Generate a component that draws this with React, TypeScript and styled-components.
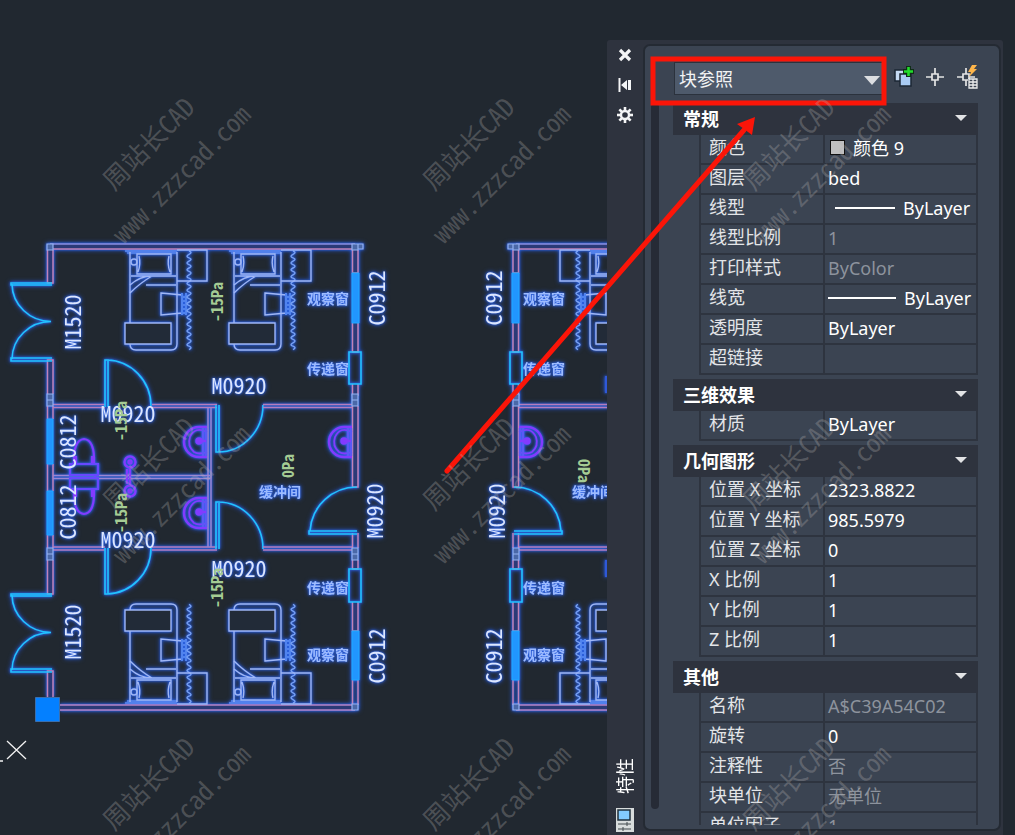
import React from "react";
import styled, { createGlobalStyle } from "styled-components";

const GlobalStyle = createGlobalStyle`
  * { box-sizing: border-box; }
  body { margin: 0; background: #212830; }
`;

const ui = `"Noto Sans", "Noto Sans CJK SC", sans-serif`;

const Workspace = styled.main`
  position: relative;
  display: flex;
  height: 100vh;
  overflow: hidden;
  background: #212830;
  font-family: ${ui};
  font-size: 18px;
  color: #fff;
`;

const Canvas = styled.section`
  flex: 1;
  min-width: 0;
  display: flex;
  overflow: hidden;
`;

const Drawing = styled.svg`
  flex: 1;
  min-width: 0;
  height: 100%;
`;

const Palette = styled.aside`
  flex: 0 0 396px;
  min-width: 0;
  display: flex;
  margin: 40px 12px 0 0;
  background: #2e333e;
  border-radius: 3px 3px 0 0;
`;

const TitleBar = styled.div`
  flex: 0 0 36px;
  display: flex;
  flex-direction: column;
  align-items: center;
  gap: 10px;
  padding: 5px 0 3px;
`;

const BarButton = styled.button`
  display: flex;
  align-items: center;
  justify-content: center;
  width: 20px;
  height: 20px;
  padding: 0;
  border: 0;
  background: none;
  color: #f4f5f6;
`;

const PaletteTitle = styled.h1`
  margin: auto 0 4px;
  font-size: 18px;
  line-height: 20px;
  font-weight: 400;
  writing-mode: vertical-rl;
  text-orientation: sideways;
  transform: rotate(180deg);
`;

const Panel = styled.div`
  flex: 1;
  min-width: 0;
  display: flex;
  flex-direction: column;
  margin: 4px 2px 4px 0;
  padding: 16px 21px 4px 6px;
  border: 2px solid #242a33;
  border-radius: 7px;
  background: #3b4452;
`;

const Toolbar = styled.div`
  display: flex;
  align-items: center;
  gap: 10px;
  padding-left: 23px;
  margin-bottom: 8px;
`;

const Picker = styled.div`
  position: relative;
  flex: 0 0 210px;
`;

const Select = styled.select`
  display: block;
  width: 100%;
  height: 33px;
  padding: 0 4px;
  border: 1px solid #2b323d;
  border-radius: 0;
  appearance: none;
  background: #4e5a6b;
  color: #f2f3f4;
  font: 18px ${ui};
`;

const PickerCaret = styled.svg`
  position: absolute;
  right: 4px;
  top: 14px;
  pointer-events: none;
`;

const ToolButton = styled.button`
  display: flex;
  padding: 0 0 3px;
  border: 0;
  background: none;
`;

const PanelBody = styled.div`
  flex: 1;
  min-height: 0;
  display: flex;
  gap: 14px;
  overflow: hidden;
`;

const ScrollTrack = styled.div`
  flex: 0 0 8px;
  margin: 0 0 16px;
  border-radius: 4px;
  background: #262b36;
`;

const Groups = styled.div`
  flex: 1;
  min-width: 0;
  display: flex;
  flex-direction: column;
  gap: 4px;
  overflow: hidden;
`;

const Group = styled.section`
  flex: none;
`;

const GroupHeader = styled.button`
  display: flex;
  align-items: center;
  justify-content: space-between;
  width: 100%;
  height: 32px;
  padding: 0 11px 3px 10px;
  border: 0;
  background: #2e333e;
  color: #fff;
  font: bold 18px ${ui};
`;

const Properties = styled.table`
  width: calc(100% - 26px);
  margin-left: 26px;
  border-collapse: separate;
  border-spacing: 0;
  border-left: 2px solid #2e343f;
  border-right: 2px solid #2e343f;
  table-layout: fixed;
`;

const Label = styled.th`
  width: 124px;
  height: 30px;
  padding: 0 0 4px 8px;
  border-bottom: 2px solid #2e343f;
  border-right: 2px solid #2e343f;
  color: #e3e5e8;
  font-weight: 400;
  line-height: 24px;
  text-align: left;
  white-space: pre;
`;

const Value = styled.td<{ $muted?: boolean }>`
  padding: 0 0 3px 3px;
  border-bottom: 2px solid #2e343f;
  color: ${(p) => (p.$muted ? "#8d939d" : "#fff")};
  line-height: 24px;
  white-space: nowrap;
`;

const ValueLine = styled.span`
  display: flex;
  align-items: center;
  gap: 8px;
`;

const Swatch = styled.i`
  width: 15px;
  height: 15px;
  margin-left: 2px;
  border: 1px solid #111;
  background: #c0c0c0;
`;

const Stroke = styled.i<{ $length: number; $indent: number }>`
  width: ${(p) => p.$length}px;
  height: 2px;
  margin-left: ${(p) => p.$indent}px;
  background: #fff;
`;

const Overlay = styled.svg`
  position: absolute;
  inset: 0;
  width: 100%;
  height: 100%;
  pointer-events: none;
`;

/* Half-width Latin glyphs keep the drafting labels narrow. */
const HalfWidthText = styled.text`
  font-family: "Noto Sans CJK SC", sans-serif;
  font-feature-settings: "hwid";
`;

const curtain = "M189 251 q4 1.4 0 3.4" + " q-4 2 0 3.4 q4 1.4 0 3.4".repeat(14);

const Bed = () => (
  <g stroke="#9fb6f5" strokeWidth="1.4" fill="none">
    <path d="M125 251H177M127 253H177" stroke="#5f8cf0" />
    <path d="M130 252V344Q130 350 136 350H171Q177 350 177 344V252" />
    <path d="M137 254H171V274H137ZM139 256Q141 264 138 272M169 256Q167 264 170 272" />
    <path d="M131 276H176M146 285H176M130 293Q140 283 152 276Q140 276 130 285" />
    <circle cx="134" cy="262" r="3" />
    <path d="M125 323H171V344H125Z" fill="#222b38" />
    <path d="M161 293L182 295V313L161 315Z" />
    <path d="M182 293V315M186 293V315M182 297H186M182 301H186M182 305H186M182 309H186M182 313H186" stroke="#5083ef" strokeWidth="2" />
    <path d={curtain} stroke="#79a2f5" />
    <path d="M177 250H207V281H177" />
  </g>
);

const Sink = () => (
  <g stroke="#823bff" fill="none" strokeWidth="2.5">
    <path d="M207 427H199A15 15 0 0 0 199 457H207" />
    <path d="M207 432Q195 426 190 437Q187 446 194 452Q199 455 207 452" strokeWidth="1.8" />
    <path d="M203 428V456M206 428V456" stroke="#5a59f5" />
    <circle cx="199" cy="441" r="2.5" fill="#823bff" />
    <path d="M199 441H206" />
  </g>
);

/* Outer wall with the observation window and the pass box. */
const EndWall = () => (
  <>
    <g fill="#2b3a78" stroke="#c183b8" strokeWidth="1.5">
      <path d="M352.500 250V273H358V250M352.500 323V352H358V323M352.500 384V395H358V384M352.500 406V487H358V406" />
      <path d="M352.500 533V548M358 533V548M352.500 560V569H358V560M352.500 602V631H358V602M352.500 680V705M358 680V705" />
    </g>
    <g fill="#4a68a8" stroke="#93b1f2" strokeWidth="1.2">
      <path d="M352 244H358V250H352ZM358 244H363V249H358ZM352 394H358V400H352ZM352 400H358V406H352ZM352 548H358V554H352ZM352 554H358V560H352ZM352 704H358V710H352Z" />
    </g>
    <g fill="#2196ff" stroke="#20aaff" strokeWidth="1">
      <path d="M352 273H359V323H352ZM352 631H359V680H352Z" />
    </g>
    <g fill="none" stroke="#22c3ff" strokeWidth="1.6">
      <path d="M349 352H361V384H349ZM349 569H361V602H349Z" />
      <path d="M357 487A47 47 0 0 0 310 531M357 531H309V534H357" />
    </g>
  </>
);

const East = () => (
  <>
    <path d="M263 404.500H353M263 407.500H353M263 547H353M263 550H353" fill="none" stroke="#b57dbd" strokeWidth="1.5" />
    <EndWall />
    <g transform="translate(104 0)"><Bed /></g>
    <g transform="matrix(1 0 0 -1 104 954)"><Bed /></g>
    <g transform="translate(145 0)"><Sink /></g>
  </>
);

const Toilet = () => (
  <g stroke="#6748ff" strokeWidth="2.2" fill="none">
    <path d="M74 464Q73 440 84 439Q95 440 94 464M76 464V456M92 464V456" stroke="#823bff" />
    <path d="M70 464H98V475H70ZM73 475H95V478H73" />
  </g>
);

interface TagProps { x: number; y: number; turn?: number; children: string; }

const Tag = ({ x, y, turn = 0, children }: TagProps) => (
  <HalfWidthText transform={`translate(${x} ${y}) rotate(${turn})`} textAnchor="middle" dy="8"
    fontSize="22" fill="#dce6ff">{children}</HalfWidthText>
);

const RoomTag = ({ x, y, children }: TagProps) => (
  <text x={x} y={y} dy="5" textAnchor="middle" fontFamily={`"Noto Sans CJK SC", sans-serif`}
    fontWeight="700" fontSize="14" fill="#9dbbff">{children}</text>
);

const Pressure = ({ x, y, turn = -90, children }: TagProps) => (
  <HalfWidthText transform={`translate(${x} ${y}) rotate(${turn})`} textAnchor="middle" dy="6"
    fontWeight="700" fontSize="16" fill="#a5cc94">{children}</HalfWidthText>
);

const glow = { filter: "drop-shadow(0 0 1px #2f68f0) drop-shadow(0 0 2px #2452c8)" };

const FloorPlan = () => (
  <Drawing role="img" aria-label="平面图">
    <g style={glow}>
      <g fill="#2b3a78">
        <path d="M50 244H355V249H50ZM60 705H355V710H60Z" />
        <path d="M516 244H620V249H516ZM516 705H620V710H516Z" />
      </g>
      <g fill="none" strokeWidth="1.5">
        <path d="M50 244H355M516 244H620" stroke="#8b8fe0" />
        <path d="M53 249H352M519 249H620" stroke="#c183b8" />
        <path d="M60 705H352M519 705H620M60 710H355M516 710H620" stroke="#b784c4" />
        <path d="M47.500 250V283H53V250M47.500 394V360H53V394M47.500 406V419M53 406V419M47.500 464V491M53 464V491M47.500 535V548M53 535V548M47.500 560V594H53V560M47.500 697V671H53V697" stroke="#c183b8" fill="#2b3a78" />
        <path d="M53 404.500H105M53 407.500H105M152 404.500H217M152 407.500H217M53 547H105M53 550H105M152 547H217M152 550H217" stroke="#b57dbd" />
        <path d="M53 475.500H210M53 478.500H210M208 408V547M211 408V547" stroke="#9b86d2" />
      </g>
      <g fill="#4a68a8" stroke="#93b1f2" strokeWidth="1.2">
        <path d="M47 244H53V250H47ZM47 394H53V400H47ZM47 400H53V406H47ZM47 548H53V554H47ZM47 554H53V560H47Z" />
      </g>
      <path d="M47 419H53V464H47ZM47 491H53V535H47Z" fill="#2196ff" stroke="#20aaff" />
      <g fill="none" stroke="#22c3ff" strokeWidth="1.6">
        <path d="M52 283H11V285H52M12 284A39 38 0 0 0 51 321.500A39 38 0 0 0 12 359M52 358H11V361H52" />
        <path d="M52 594H11V596H52M12 595A39 38 0 0 0 51 632.500A39 38 0 0 0 12 670M52 669H11V672H52" />
        <path d="M105 407V360H108V407M107 360A45 46 0 0 1 151 406" />
        <path d="M105 548V594H108V548M107 594A45 46 0 0 0 151 548" />
        <path d="M216 405V452H219V405M218 452A45 47 0 0 0 263 405" />
        <path d="M216 549V502H219V549M218 502A45 47 0 0 1 263 549" />
      </g>
      <Bed />
      <g transform="matrix(1 0 0 -1 0 954)"><Bed /></g>
      <Sink />
      <g transform="translate(0 71)"><Sink /></g>
      <Toilet />
      <g transform="matrix(1 0 0 -1 0 953)"><Toilet /></g>
      <g stroke="#823bff" strokeWidth="2.4" fill="none">
        <circle cx="130" cy="462" r="5.500" /><circle cx="130" cy="462" r="1.500" />
        <circle cx="130" cy="491" r="5.500" /><circle cx="130" cy="491" r="1.500" />
        <path d="M130 467V486M127 469V484" />
      </g>
      <East />
      <g transform="matrix(-1 0 0 1 871 0)"><East /></g>
      <path d="M606 376V393M606 560V577" stroke="#2f58d8" strokeWidth="2" />

      <Tag x={73} y={322} turn={-90}>M1520</Tag>
      <Tag x={73} y={632} turn={-90}>M1520</Tag>
      <Tag x={68} y={442} turn={-90}>C0812</Tag>
      <Tag x={68} y={512} turn={-90}>C0812</Tag>
      <Tag x={128} y={414}>M0920</Tag>
      <Tag x={128} y={540}>M0920</Tag>
      <Tag x={239} y={386}>M0920</Tag>
      <Tag x={239} y={569}>M0920</Tag>
      <Tag x={377} y={298} turn={-90}>C0912</Tag>
      <Tag x={377} y={656} turn={-90}>C0912</Tag>
      <Tag x={375} y={511} turn={-90}>M0920</Tag>
      <Tag x={494} y={298} turn={-90}>C0912</Tag>
      <Tag x={494} y={656} turn={-90}>C0912</Tag>
      <Tag x={497} y={511} turn={-90}>M0920</Tag>
      <RoomTag x={328} y={299}>观察窗</RoomTag>
      <RoomTag x={328} y={369}>传递窗</RoomTag>
      <RoomTag x={328} y={588}>传递窗</RoomTag>
      <RoomTag x={328} y={655}>观察窗</RoomTag>
      <RoomTag x={280} y={492}>缓冲间</RoomTag>
      <RoomTag x={544} y={299}>观察窗</RoomTag>
      <RoomTag x={544} y={369}>传递窗</RoomTag>
      <RoomTag x={544} y={588}>传递窗</RoomTag>
      <RoomTag x={544} y={655}>观察窗</RoomTag>
      <RoomTag x={593} y={492}>缓冲间</RoomTag>
    </g>
    <Pressure x={217} y={302}>-15Pa</Pressure>
    <Pressure x={217} y={588}>-15Pa</Pressure>
    <Pressure x={121} y={421}>-15Pa</Pressure>
    <Pressure x={121} y={513}>-15Pa</Pressure>
    <Pressure x={288} y={466}>0Pa</Pressure>
    <Pressure x={584} y={471} turn={90}>0Pa</Pressure>
    <path d="M35.500 697.500H59.500V721.500H35.500Z" fill="#0480ff" stroke="#3a6fae" />
    <path d="M7 741L26 759M26 741L7 759M0 761H3" stroke="#f2f2f2" strokeWidth="1.3" />
  </Drawing>
);

const Caret = ({ size }: { size: number }) => (
  <svg width={size} height={size / 2} viewBox="0 0 12 6" aria-hidden="true"><path d="M0 0H12L6 6Z" fill="#e2e3e5" /></svg>
);

interface Property { label: string; value?: string; muted?: boolean; swatch?: boolean; line?: [number, number]; }

const groups: { title: string; rows: Property[] }[] = [
  {
    title: "常规",
    rows: [
      { label: "颜色", value: "颜色 9", swatch: true },
      { label: "图层", value: "bed" },
      { label: "线型", value: "ByLayer", line: [60, 7] },
      { label: "线型比例", value: "1", muted: true },
      { label: "打印样式", value: "ByColor", muted: true },
      { label: "线宽", value: "ByLayer", line: [68, 0] },
      { label: "透明度", value: "ByLayer" },
      { label: "超链接" },
    ],
  },
  { title: "三维效果", rows: [{ label: "材质", value: "ByLayer" }] },
  {
    title: "几何图形",
    rows: [
      { label: "位置 X 坐标", value: "2323.8822" },
      { label: "位置 Y 坐标", value: "985.5979" },
      { label: "位置 Z 坐标", value: "0" },
      { label: "X 比例", value: "1" },
      { label: "Y 比例", value: "1" },
      { label: "Z 比例", value: "1" },
    ],
  },
  {
    title: "其他",
    rows: [
      { label: "名称", value: "A$C39A54C02", muted: true },
      { label: "旋转", value: "0" },
      { label: "注释性", value: "否", muted: true },
      { label: "块单位", value: "无单位", muted: true },
      { label: "单位因子", value: "1", muted: true },
    ],
  },
];

const PropertyRow = ({ label, value, muted, swatch, line }: Property) => (
  <tr>
    <Label scope="row">{label}</Label>
    <Value $muted={muted}>
      <ValueLine>
        {swatch && <Swatch />}
        {line && <Stroke $length={line[0]} $indent={line[1]} />}
        {value}
      </ValueLine>
    </Value>
  </tr>
);

const Crosshair = () => (
  <path d="M9 0V6M9 12V18M0 9H6M12 9H18M6 6H12V12H6Z" fill="none" stroke="#e4e4e4" strokeWidth="1.700" />
);

const gearTeeth = [0, 45, 90, 135, 180, 225, 270, 315];

const PropertiesPalette = () => (
  <Palette aria-label="特性">
    <TitleBar>
      <BarButton aria-label="关闭">
        <svg width="14" height="14"><path d="M2 2L12 12M12 2L2 12" stroke="currentColor" strokeWidth="3.200" /></svg>
      </BarButton>
      <BarButton aria-label="自动隐藏">
        <svg width="14" height="14"><path d="M1.500 0V14" stroke="currentColor" strokeWidth="2" /><path d="M3 7L9 2V12ZM10 2H13V12H10Z" fill="currentColor" /></svg>
      </BarButton>
      <BarButton aria-label="设置">
        <svg width="16" height="16" viewBox="-8 -8 16 16" fill="none" stroke="currentColor">
          <circle r="4" strokeWidth="2.400" />
          {gearTeeth.map((a) => <path key={a} d="M0 -4V-8" strokeWidth="2.600" transform={`rotate(${a})`} />)}
        </svg>
      </BarButton>
      <PaletteTitle>特性</PaletteTitle>
      <svg width="18" height="24" aria-hidden="true">
        <path d="M0 0H18V24H0Z" fill="#d8dcdc" />
        <path d="M2 2H14V12H2Z" fill="#83cbff" stroke="#20303c" strokeWidth="1.500" />
        <path d="M2 16H15M11 14V18M2 21H15M7 19V23" stroke="#40484c" />
      </svg>
    </TitleBar>
    <Panel>
      <Toolbar>
        <Picker>
          <Select aria-label="对象类型" defaultValue="block"><option value="block">块参照</option></Select>
          <PickerCaret width="16" height="9"><path d="M0 0H16L8 9Z" fill="#dcdee1" /></PickerCaret>
        </Picker>
        <ToolButton aria-label="切换 PICKADD">
          <svg width="22" height="22">
            <path d="M1 4H11V15H1Z" fill="#c6dbf4" stroke="#1c2735" strokeWidth="1.500" />
            <path d="M6 8H17V20H6Z" fill="#a9cbf3" stroke="#1c2735" strokeWidth="1.500" />
            <path d="M14.500 0V11M9 5.500H20" stroke="#0f2e16" strokeWidth="5" />
            <path d="M14.500 1V10M10 5.500H19" stroke="#22dd2c" strokeWidth="2.600" />
          </svg>
        </ToolButton>
        <ToolButton aria-label="选择对象"><svg width="20" height="18"><Crosshair /></svg></ToolButton>
        <ToolButton aria-label="快速选择">
          <svg width="24" height="24">
            <g transform="translate(1 3)"><Crosshair /></g>
            <path d="M12 14H22V24H12Z" fill="#3b4452" />
            <path d="M13 14H21V23H13ZM17 14V23M13 17H21M13 20H21" fill="none" stroke="#ededed" strokeWidth="1.300" />
            <path d="M16 0H21L18 4H21L13 12L15 7H12Z" fill="#ffb64a" />
          </svg>
        </ToolButton>
      </Toolbar>
      <PanelBody>
        <ScrollTrack />
        <Groups>
          {groups.map((g) => (
            <Group key={g.title}>
              <GroupHeader aria-expanded="true">{g.title}<Caret size={12} /></GroupHeader>
              <Properties><tbody>{g.rows.map((r) => <PropertyRow key={r.label} {...r} />)}</tbody></Properties>
            </Group>
          ))}
        </Groups>
      </PanelBody>
    </Panel>
  </Palette>
);

const watermarks = [0, 320, 640].flatMap((y) => [0, 320, 640].map((x) => ({ x, y })));

export default function App() {
  return (
    <>
      <GlobalStyle />
      <Workspace>
        <Canvas><FloorPlan /></Canvas>
        <PropertiesPalette />
        <Overlay aria-hidden="true">
          <g fill="none" stroke="#fb1508" strokeWidth="5">
            <path d="M653 59H884V103H653Z" />
            <path d="M447 471L744 130" strokeLinecap="round" />
          </g>
          <path d="M755 117L737 124L744 129L752 135Z" fill="#fb1508" />
          <g fill="#b8b4b2" fillOpacity="0.300" fontSize="26" textAnchor="middle">
            {watermarks.map(({ x, y }) => (
              <g key={`${x}-${y}`} transform={`translate(${x} ${y})`}>
                <HalfWidthText transform="translate(149 144) rotate(-45)" dy="9">周站长CAD</HalfWidthText>
                <HalfWidthText transform="translate(183 176) rotate(-45)" dy="7">www.zzzcad.com</HalfWidthText>
              </g>
            ))}
          </g>
        </Overlay>
      </Workspace>
    </>
  );
}
